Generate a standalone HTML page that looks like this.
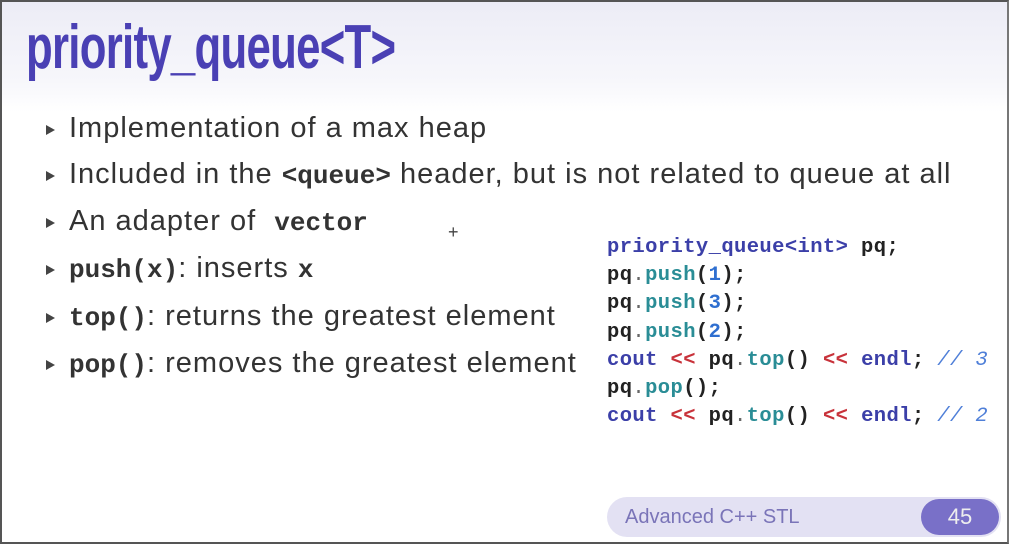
<!DOCTYPE html>
<html><head><meta charset="utf-8"><style>
body{margin:0;width:1009px;height:544px;overflow:hidden;background:#fff;font-family:"Liberation Sans",sans-serif;}
.frame{position:absolute;left:0;top:0;width:1005px;height:540px;border:2px solid #555;border-right-color:#777;background:linear-gradient(#ececf6 0px,#f7f7fb 80px,#fff 110px);}
.title{position:absolute;left:26px;top:12px;font-family:"Liberation Sans Narrow","Liberation Sans",sans-serif;font-weight:bold;font-size:62px;color:#4a40b4;transform:scaleX(0.705);transform-origin:left;letter-spacing:-1px;white-space:nowrap;}
.b{position:absolute;left:46px;font-size:29px;color:#333;white-space:nowrap;letter-spacing:1.0px;}
.b:before{content:"";position:absolute;left:0;top:13px;border-left:9px solid #444;border-top:5px solid transparent;border-bottom:5px solid transparent;}
.b span.t{margin-left:23px;}
code{font-family:"Liberation Mono",monospace;font-weight:bold;font-size:26px;color:#333;letter-spacing:0;}
.code{position:absolute;left:607px;top:234px;font-family:"Liberation Mono",monospace;font-size:20.5px;line-height:28.2px;color:#222;white-space:pre;font-weight:bold;letter-spacing:0.4px;}
.k{color:#3b3fa8}.f{color:#2a8d96}.n{color:#2f6fd0}.o{color:#c8323a}.c{color:#4f7fd8;font-style:italic;font-weight:normal}.p{color:#666;font-weight:normal}
.foot{position:absolute;left:607px;top:497px;width:394px;height:40px;border-radius:20px;background:#e3e1f3;}
.foot .l{position:absolute;left:18px;top:9px;font-size:20px;color:#7a74b8;}
.foot .r{position:absolute;right:2px;top:2px;width:78px;height:36px;border-radius:18px;background:#7970c8;color:#eee;font-size:22px;text-align:center;line-height:36px;}
</style></head><body>
<div class="frame"></div>
<div class="title">priority_queue&lt;T&gt;</div>
<div class="b" style="top:112px"><span class="t">Implementation of a max heap</span></div>
<div class="b" style="top:158px"><span class="t">Included in the <code>&lt;queue&gt;</code> header, but is not related to queue at all</span></div>
<div class="b" style="top:205px"><span class="t">An adapter of &nbsp;<code>vector</code></span></div>
<div class="b" style="top:252px"><span class="t"><code>push(x)</code>: inserts <code>x</code></span></div>
<div class="b" style="top:300px"><span class="t"><code>top()</code>: returns the greatest element</span></div>
<div class="b" style="top:347px"><span class="t"><code>pop()</code>: removes the greatest element</span></div>
<div style="position:absolute;left:448px;top:222px;color:#444;font-size:18px">+</div>
<div class="code"><span class="k">priority_queue&lt;int&gt;</span> pq;
pq<span class="p">.</span><span class="f">push</span>(<span class="n">1</span>);
pq<span class="p">.</span><span class="f">push</span>(<span class="n">3</span>);
pq<span class="p">.</span><span class="f">push</span>(<span class="n">2</span>);
<span class="k">cout</span> <span class="o">&lt;&lt;</span> pq<span class="p">.</span><span class="f">top</span>() <span class="o">&lt;&lt;</span> <span class="k">endl</span>; <span class="c">// 3</span>
pq<span class="p">.</span><span class="f">pop</span>();
<span class="k">cout</span> <span class="o">&lt;&lt;</span> pq<span class="p">.</span><span class="f">top</span>() <span class="o">&lt;&lt;</span> <span class="k">endl</span>; <span class="c">// 2</span></div>
<div class="foot"><div class="l">Advanced C++ STL</div><div class="r">45</div></div>
</body></html>
